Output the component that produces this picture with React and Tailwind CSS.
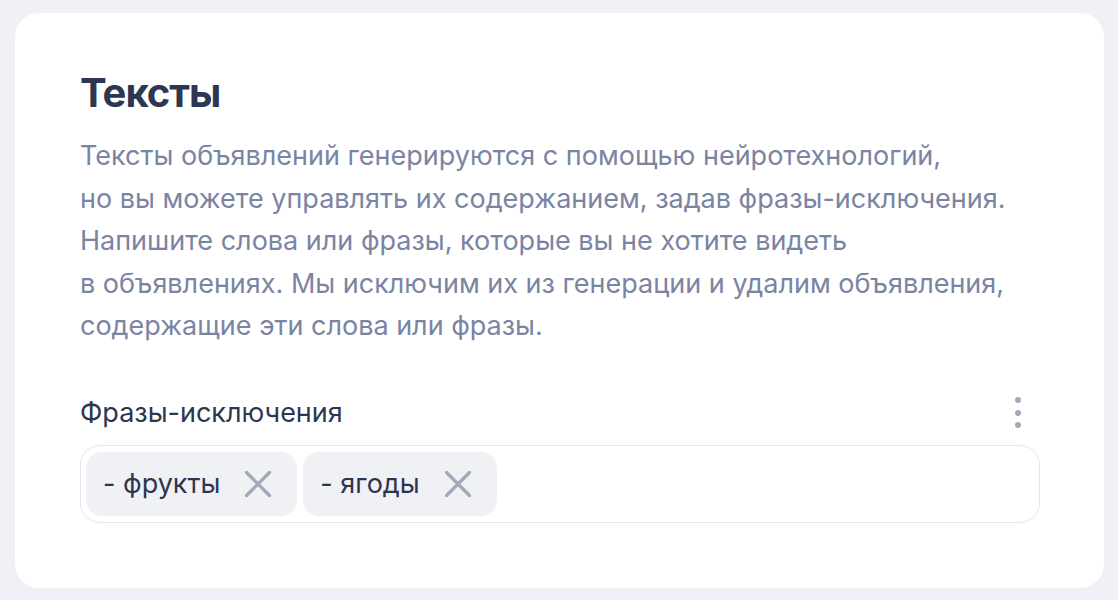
import React from "react";

function XIcon() {
  return (
    <svg width="28" height="28" viewBox="0 0 28 28" fill="none" className="shrink-0">
      <path d="M2.5 2.5L25.5 25.5M25.5 2.5L2.5 25.5" stroke="#a2a8ba" strokeWidth="3.2" strokeLinecap="round" />
    </svg>
  );
}

function Chip({ label }) {
  return (
    <div className="flex h-[64px] items-center gap-[24px] rounded-[16px] bg-[#f0f1f5] pl-[17px] pr-[25px]">
      <span className="text-[27px] leading-[32px] text-[#2d3550]">{label}</span>
      <XIcon />
    </div>
  );
}

export default function App() {
  return (
    <div
      className="min-h-[600px] w-full bg-[#f0f1f6] px-[15px] pt-[13px]"
      style={{ fontFamily: "Inter, 'Noto Sans', sans-serif" }}
    >
      <div className="h-[575px] w-[1089px] rounded-[24px] bg-white pl-[65px] pr-[64px] pt-[58px]">
        <h1 className="text-[40px] font-bold leading-[44px] tracking-[-1px] text-[#2e3752]">Тексты</h1>
        <p className="mt-[20px] text-[27px] leading-[42.5px] text-[#7a84a3]">
          Тексты объявлений генерируются с помощью нейротехнологий,
          <br />
          но вы можете управлять их содержанием, задав фразы-исключения.
          <br />
          Напишите слова или фразы, которые вы не хотите видеть
          <br />
          в объявлениях. Мы исключим их из генерации и удалим объявления,
          <br />
          содержащие эти слова или фразы.
        </p>
        <div className="mt-[49px] flex h-[32px] items-center justify-between">
          <span className="text-[27px] leading-[32px] text-[#2d3550]">Фразы-исключения</span>
          <div className="mr-[19px] flex flex-col items-center gap-[6.5px]">
            <span className="h-[6px] w-[6px] rounded-full bg-[#a3a9bb]" />
            <span className="h-[6px] w-[6px] rounded-full bg-[#a3a9bb]" />
            <span className="h-[6px] w-[6px] rounded-full bg-[#a3a9bb]" />
          </div>
        </div>
        <div className="mt-[16px] flex h-[78px] items-center gap-[6px] rounded-[20px] border border-[#e6e7ef] px-[5px]">
          <Chip label="- фрукты" />
          <Chip label="- ягоды" />
        </div>
      </div>
    </div>
  );
}
